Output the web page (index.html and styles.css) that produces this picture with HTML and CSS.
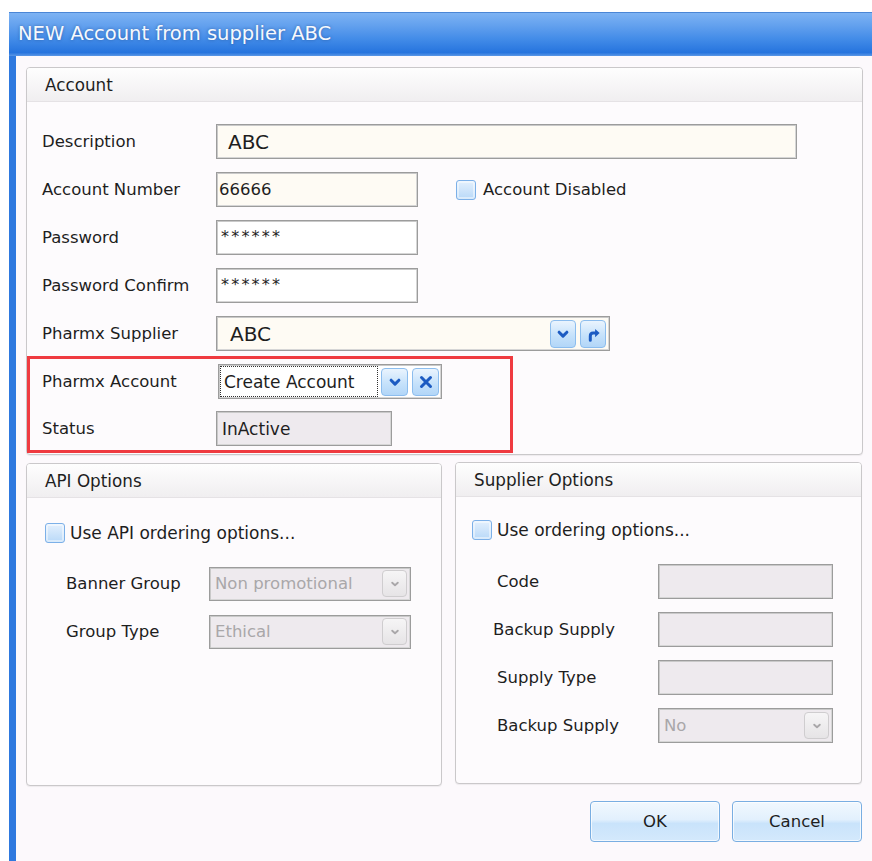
FILE: index.html
```html
<!DOCTYPE html>
<html lang="en">
<head>
<meta charset="utf-8">
<title>NEW Account from supplier ABC</title>
<link rel="stylesheet" href="styles.css">
</head>
<body>
<div class="window">
  <div class="titlebar">NEW Account from supplier ABC</div>
  <div class="client">
    <div class="content">
      <section class="panel account">
        <div class="panel-head">Account</div>
        <div class="account-body">
          <div class="fields">
            <div class="row">
              <span class="lbl">Description</span>
              <div class="field cream wide"><span class="big">ABC</span></div>
            </div>
            <div class="row">
              <span class="lbl">Account Number</span>
              <div class="field cream short">66666</div>
              <label class="check disabled-check"><span class="box"></span>Account Disabled</label>
            </div>
            <div class="row">
              <span class="lbl">Password</span>
              <div class="field short pw">******</div>
            </div>
            <div class="row">
              <span class="lbl">Password Confirm</span>
              <div class="field short pw">******</div>
            </div>
            <div class="row">
              <span class="lbl">Pharmx Supplier</span>
              <div class="field cream combo supplier-combo">
                <span class="big">ABC</span>
                <span class="tools">
                  <span class="ibtn"><svg viewBox="0 0 12 12"><path d="M3.4 4.8 L6 7.4 L8.6 4.8"/></svg></span>
                  <span class="ibtn"><svg viewBox="0 0 12 12"><path d="M4.2 10.2 V7.4 Q4.2 5.4 6 5.4 H7.8"/><polygon class="fill" points="7.4,2.6 10.4,5.4 7.4,8.2"/></svg></span>
                </span>
              </div>
            </div>
          </div>
          <div class="highlight">
            <div class="row">
              <span class="lbl">Pharmx Account</span>
              <div class="field combo account-combo">
                <span class="focus-val">Create Account</span>
                <span class="tools">
                  <span class="ibtn"><svg viewBox="0 0 12 12"><path d="M3.4 4.8 L6 7.4 L8.6 4.8"/></svg></span>
                  <span class="ibtn"><svg viewBox="0 0 12 12"><path d="M3 3 L9 9 M9 3 L3 9"/></svg></span>
                </span>
              </div>
            </div>
            <div class="row">
              <span class="lbl">Status</span>
              <div class="field grey status">InActive</div>
            </div>
          </div>
        </div>
      </section>

      <div class="options">
        <section class="panel api">
          <div class="panel-head">API Options</div>
          <div class="api-body">
            <label class="check"><span class="box"></span>Use API ordering options...</label>
            <div class="opt-fields api-fields">
              <div class="row">
                <span class="lbl">Banner Group</span>
                <div class="field grey off combo api-combo">Non promotional<span class="gbtn"><svg viewBox="0 0 12 12"><path d="M3.6 4.9 L6 7.1 L8.4 4.9"/></svg></span></div>
              </div>
              <div class="row">
                <span class="lbl">Group Type</span>
                <div class="field grey off combo api-combo">Ethical<span class="gbtn"><svg viewBox="0 0 12 12"><path d="M3.6 4.9 L6 7.1 L8.4 4.9"/></svg></span></div>
              </div>
            </div>
          </div>
        </section>

        <section class="panel supplier">
          <div class="panel-head">Supplier Options</div>
          <div class="supplier-body">
            <label class="check"><span class="box"></span>Use ordering options...</label>
            <div class="opt-fields supplier-fields">
              <div class="row">
                <span class="lbl">Code</span>
                <div class="field grey sup-field"></div>
              </div>
              <div class="row">
                <span class="lbl nudge">Backup Supply</span>
                <div class="field grey sup-field"></div>
              </div>
              <div class="row">
                <span class="lbl">Supply Type</span>
                <div class="field grey sup-field"></div>
              </div>
              <div class="row">
                <span class="lbl">Backup Supply</span>
                <div class="field grey off combo sup-field">No<span class="gbtn"><svg viewBox="0 0 12 12"><path d="M3.6 4.9 L6 7.1 L8.4 4.9"/></svg></span></div>
              </div>
            </div>
          </div>
        </section>
      </div>

      <div class="actions">
        <button class="btn" type="button">OK</button>
        <button class="btn" type="button">Cancel</button>
      </div>
    </div>
  </div>
</div>
</body>
</html>
```

FILE: styles.css
```css
html, body {
  margin: 0;
  height: 100%;
}

body {
  background: #ffffff;
  overflow: hidden;
  font-family: "DejaVu Sans", Verdana, sans-serif;
  font-size: 16.5px;
  color: #1e1e1e;
}

/* window frame */
.window {
  margin: 12px 0 0 9px;
  width: 880px;
  height: 849px;
  display: flex;
  flex-direction: column;
}

.titlebar {
  height: 44px;
  box-sizing: border-box;
  border-top: 1px solid #4a86d6;
  background: linear-gradient(#7db3f3 0%, #62a0ee 30%, #438ce8 60%, #2674de 92%, #5b97e6 100%);
  padding-left: 9px;
  line-height: 42px;
  font-size: 19.5px;
  color: #f6f9fd;
  text-shadow: 0 0 3px rgba(20, 50, 110, 0.5);
  white-space: nowrap;
}

.client {
  flex: 1;
  border-left: 7px solid #2e79df;
  background: #fcf9fc;
  padding: 11px 0 0 10px;
}

.content {
  width: 837px;
}

/* group boxes */
.panel {
  box-sizing: border-box;
  border: 1px solid #cac8ca;
  border-radius: 4px;
  background: #fdfbfd;
  box-shadow: 0 1px 1px rgba(0, 0, 0, 0.06);
}

.panel-head {
  height: 34px;
  box-sizing: border-box;
  border-bottom: 1px solid #e5e2e5;
  background: linear-gradient(#fefefe, #f0eef0);
  padding-left: 18px;
  line-height: 34px;
  font-size: 16.8px;
  border-radius: 3px 3px 0 0;
}

.account {
  height: 388px;
}

.account-body {
  padding-top: 22px;
}

.fields {
  display: flex;
  flex-direction: column;
  gap: 13px;
  padding-left: 15px;
}

.row {
  display: flex;
  align-items: center;
  height: 35px;
}

.lbl {
  width: 174px;
  flex: none;
  white-space: nowrap;
}

/* text boxes */
.field {
  height: 35px;
  box-sizing: border-box;
  border: 1px solid #9c9c9c;
  box-shadow: inset 1px 1px 0 #c9c9c9, inset -1px -1px 0 #d6d6d6;
  background: #ffffff;
  display: flex;
  align-items: center;
  padding-left: 2px;
  flex: none;
  white-space: nowrap;
}

.cream {
  background: #fefbf4;
}

.grey {
  background: #eeeaee;
}

.off {
  color: #a9a7a9;
}

.wide {
  width: 581px;
}

.short {
  width: 202px;
}

.big {
  font-size: 20px;
  padding-left: 9px;
}

.pw {
  align-items: flex-start;
  padding: 6px 0 0 4px;
  font-size: 16px;
  letter-spacing: 2.2px;
}

/* checkboxes */
.check {
  display: flex;
  align-items: center;
  gap: 5px;
  font-size: 17px;
  white-space: nowrap;
}

.disabled-check {
  margin-left: 38px;
  gap: 7px;
  font-size: 16.5px;
}

.box {
  width: 20px;
  height: 20px;
  box-sizing: border-box;
  border: 1px solid #7cb0e8;
  border-radius: 3px;
  background: linear-gradient(#e4f0fd, #b9d9f8);
  box-shadow: inset 0 0 0 2px rgba(255, 255, 255, 0.45);
  flex: none;
}

/* combos with blue buttons */
.combo {
  padding-right: 3px;
}

.tools {
  margin-left: auto;
  display: flex;
  gap: 4px;
}

.ibtn {
  width: 26px;
  height: 28px;
  box-sizing: border-box;
  border: 1px solid #8cbdee;
  border-radius: 4px;
  background: linear-gradient(#eaf4fe, #c6e2fb 55%, #b2d6f8);
  display: flex;
  align-items: center;
  justify-content: center;
}

.ibtn svg {
  width: 18px;
  height: 18px;
}

.ibtn path {
  fill: none;
  stroke: #1c5bc2;
  stroke-width: 2;
  stroke-linecap: round;
  stroke-linejoin: round;
}

.ibtn .fill {
  fill: #1c5bc2;
}

.supplier-combo {
  width: 394px;
}

.supplier-combo .big {
  padding-left: 11px;
}

.highlight {
  margin-top: 5px;
  width: 486px;
  height: 97px;
  box-sizing: border-box;
  border: 3px solid #ef3a40;
  padding: 5px 0 0 12px;
  display: flex;
  flex-direction: column;
  gap: 12px;
}

.account-combo {
  width: 224px;
  margin-left: 2px;
  padding-left: 1px;
  padding-right: 2px;
}

.account-combo .ibtn {
  width: 27px;
}

.focus-val {
  width: 158px;
  height: 31px;
  box-sizing: border-box;
  border: 1px dotted #303030;
  display: flex;
  align-items: center;
  padding-left: 3px;
  font-size: 17px;
  background: #ffffff;
}

.status {
  width: 176px;
  padding-left: 5px;
  font-size: 17px;
}

/* option group boxes */
.options {
  display: flex;
  gap: 13px;
  margin-top: 8px;
  align-items: flex-start;
}

.api {
  width: 416px;
  height: 323px;
}

.supplier {
  width: 407px;
  height: 322px;
  margin-top: -1px;
}

.api-body {
  padding: 25px 0 0 18px;
}

.supplier-body {
  padding: 23px 0 0 16px;
}

.opt-fields {
  display: flex;
  flex-direction: column;
}

.api-fields {
  margin-top: 23px;
  padding-left: 21px;
  gap: 13px;
}

.api-fields .lbl {
  width: 143px;
}

.api-combo {
  width: 202px;
  height: 34px;
  padding-left: 5px;
  padding-right: 3px;
}

.gbtn {
  margin-left: auto;
  width: 25px;
  height: 27px;
  box-sizing: border-box;
  border: 1px solid #cfcdcf;
  border-radius: 4px;
  background: linear-gradient(#f6f5f6, #e6e4e6);
  display: flex;
  align-items: center;
  justify-content: center;
}

.gbtn svg {
  width: 14px;
  height: 14px;
}

.gbtn path {
  fill: none;
  stroke: #a9a7a9;
  stroke-width: 1.6;
  stroke-linecap: round;
  stroke-linejoin: round;
}

.supplier-fields {
  margin-top: 24px;
  padding-left: 25px;
  gap: 13px;
}

.supplier-fields .lbl {
  width: 161px;
}

.supplier-fields .lbl.nudge {
  margin-left: -4px;
  width: 165px;
}

.sup-field {
  width: 175px;
  padding-left: 5px;
}

/* dialog buttons */
.actions {
  display: flex;
  justify-content: flex-end;
  gap: 12px;
  margin-top: 15px;
  padding-right: 1px;
}

.btn {
  width: 130px;
  height: 41px;
  box-sizing: border-box;
  border: 1px solid #79aee2;
  border-radius: 4px;
  background: linear-gradient(#f1f8fe 0%, #e2f0fd 45%, #c9e3fb 55%, #d4e9fc 100%);
  box-shadow: inset 0 0 0 1px rgba(255, 255, 255, 0.7);
  font-family: "DejaVu Sans", Verdana, sans-serif;
  font-size: 16.5px;
  color: #1e1e1e;
  padding: 0;
}
```
